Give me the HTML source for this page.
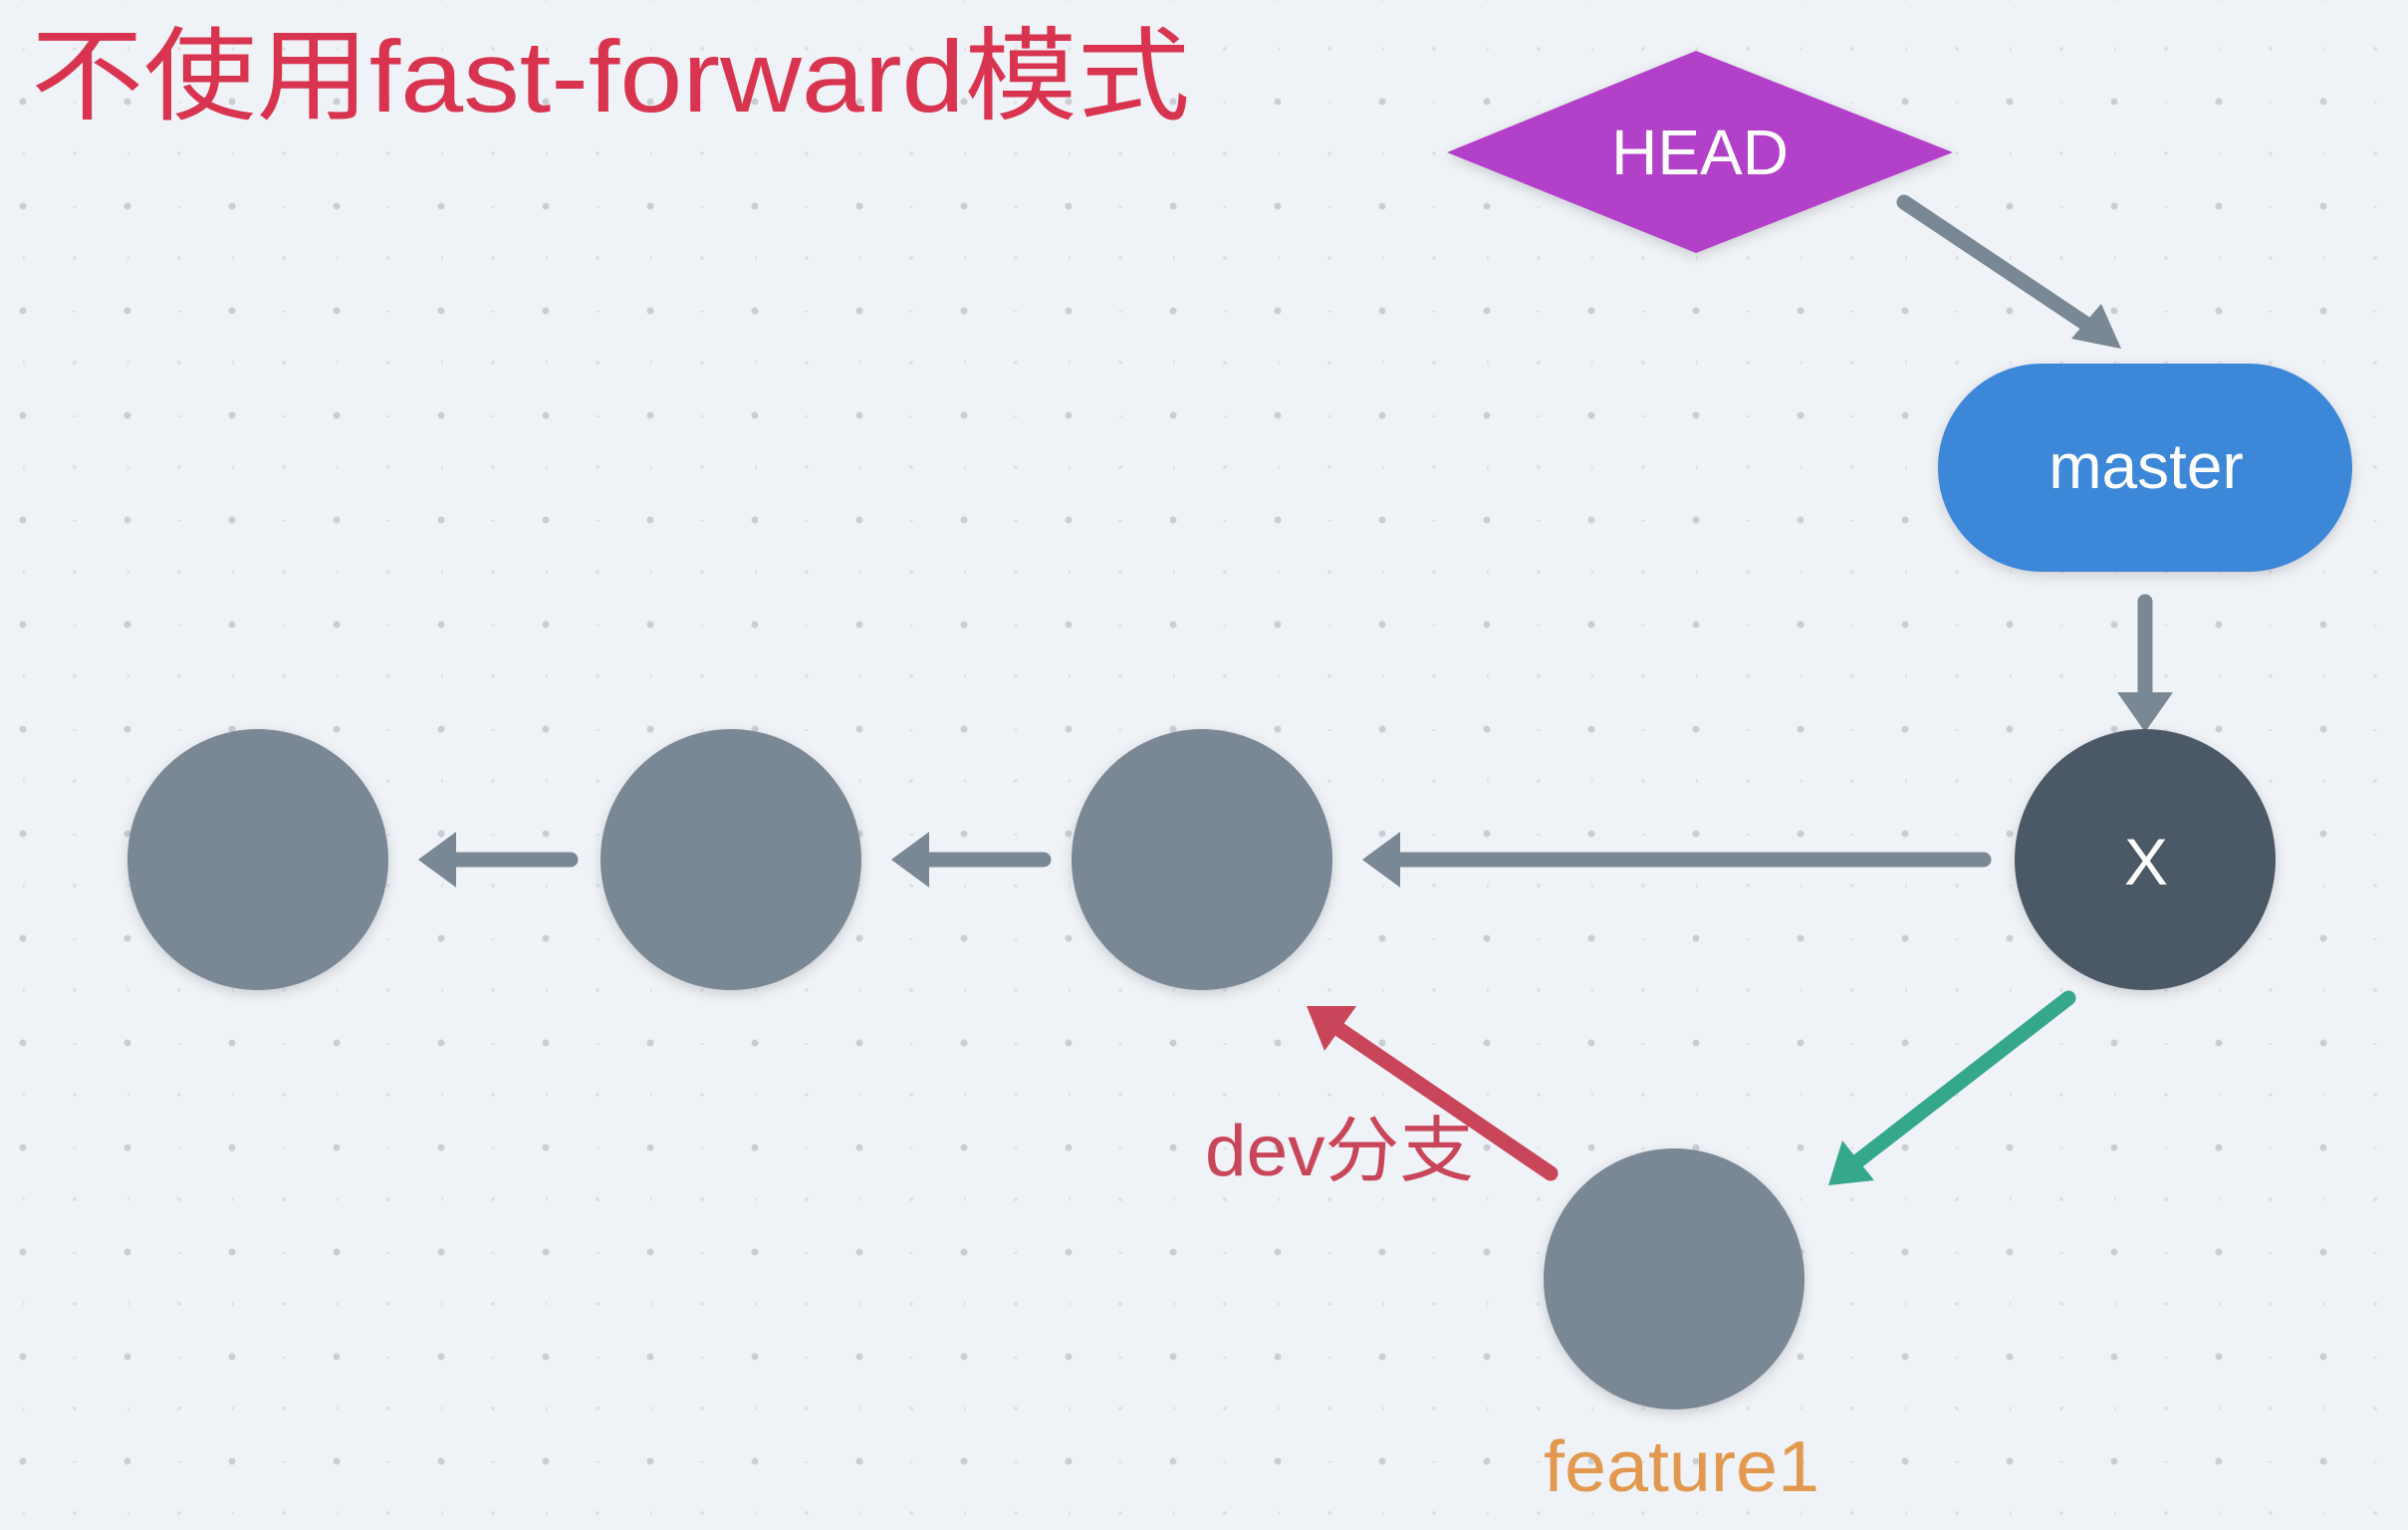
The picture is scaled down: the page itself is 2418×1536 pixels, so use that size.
<!DOCTYPE html>
<html><head><meta charset="utf-8"><style>html,body{margin:0;padding:0;background:#eff2f6;}svg{display:block}</style></head>
<body>
<svg width="2418" height="1536" viewBox="0 0 2418 1536" xmlns="http://www.w3.org/2000/svg">
<defs>
<pattern id="dots" x="23" y="207" width="105" height="105" patternUnits="userSpaceOnUse">
<circle cx="0" cy="0" r="3.5" fill="#c9ced5"/><circle cx="105" cy="0" r="3.5" fill="#c9ced5"/><circle cx="0" cy="105" r="3.5" fill="#c9ced5"/><circle cx="105" cy="105" r="3.5" fill="#c9ced5"/>
<circle cx="52" cy="0" r="2" fill="#dde1e6"/><circle cx="0" cy="52" r="2" fill="#dde1e6"/><circle cx="52" cy="52" r="2" fill="#dde1e6"/>
</pattern>
<filter id="sh" x="-20%" y="-20%" width="140%" height="140%"><feDropShadow dx="0" dy="4" stdDeviation="6" flood-color="#000" flood-opacity="0.15"/></filter>
</defs>
<rect width="2418" height="1536" fill="#eff2f6"/>
<rect width="2418" height="1536" fill="url(#dots)"/>
<text x="31" y="112" font-family="Liberation Sans, Noto Sans CJK SC, sans-serif" font-size="102" fill="#d9344f" textLength="1164" lengthAdjust="spacingAndGlyphs">不使用fast-forward模式</text>

<polygon points="1453,153 1703,51 1961,153 1703,254" fill="#b240c9" filter="url(#sh)"/>
<text x="1707" y="175" text-anchor="middle" font-family="Liberation Sans, sans-serif" font-size="64" fill="#fff">HEAD</text>

<g stroke-linecap="round" stroke-width="15" fill="none">
<line x1="1912" y1="203" x2="2105" y2="332" stroke="#7a8795"/>
<line x1="2154" y1="604" x2="2154" y2="705" stroke="#7a8795"/>
<line x1="573" y1="863" x2="445" y2="863" stroke="#7a8795"/>
<line x1="1048" y1="863" x2="918" y2="863" stroke="#7a8795"/>
<line x1="1992" y1="863" x2="1390" y2="863" stroke="#7a8795"/>
<line x1="2077" y1="1002" x2="1860" y2="1170" stroke="#35a88c"/>
<line x1="1557" y1="1178" x2="1340" y2="1030" stroke="#c9465a"/>
</g>
<g>
<polygon points="2130,350 2080,340 2110,305" fill="#7a8795"/>
<polygon points="2154,735 2126,695 2182,695" fill="#7a8795"/>
<polygon points="420,863 458,835 458,891" fill="#7a8795"/>
<polygon points="895,863 933,835 933,891" fill="#7a8795"/>
<polygon points="1368,863 1406,835 1406,891" fill="#7a8795"/>
<polygon points="1836,1190 1850,1145 1882,1185" fill="#35a88c"/>
<polygon points="1312,1010 1362,1010 1330,1055" fill="#c9465a"/>
</g>

<rect x="1946" y="365" width="416" height="209" rx="104.5" fill="#3d87d8" filter="url(#sh)"/>
<text x="2155" y="490" text-anchor="middle" font-family="Liberation Sans, sans-serif" font-size="64" fill="#fff">master</text>

<g filter="url(#sh)">
<circle cx="259" cy="863" r="131" fill="#7a8795"/>
<circle cx="734" cy="863" r="131" fill="#7a8795"/>
<circle cx="1207" cy="863" r="131" fill="#7a8795"/>
<circle cx="2154" cy="863" r="131" fill="#4b5866"/>
<circle cx="1681" cy="1284" r="131" fill="#7a8795"/>
</g>
<text x="2155" y="888" text-anchor="middle" font-family="Liberation Sans, sans-serif" font-size="66" fill="#fff">X</text>

<text x="1210" y="1180" font-family="Liberation Sans, Noto Sans CJK SC, sans-serif" font-size="72" fill="#c9465a" textLength="270" lengthAdjust="spacingAndGlyphs">dev分支</text>
<text x="1550" y="1497" font-family="Liberation Sans, sans-serif" font-size="72" fill="#e2994f" textLength="277" lengthAdjust="spacingAndGlyphs">feature1</text>
</svg>
</body></html>
